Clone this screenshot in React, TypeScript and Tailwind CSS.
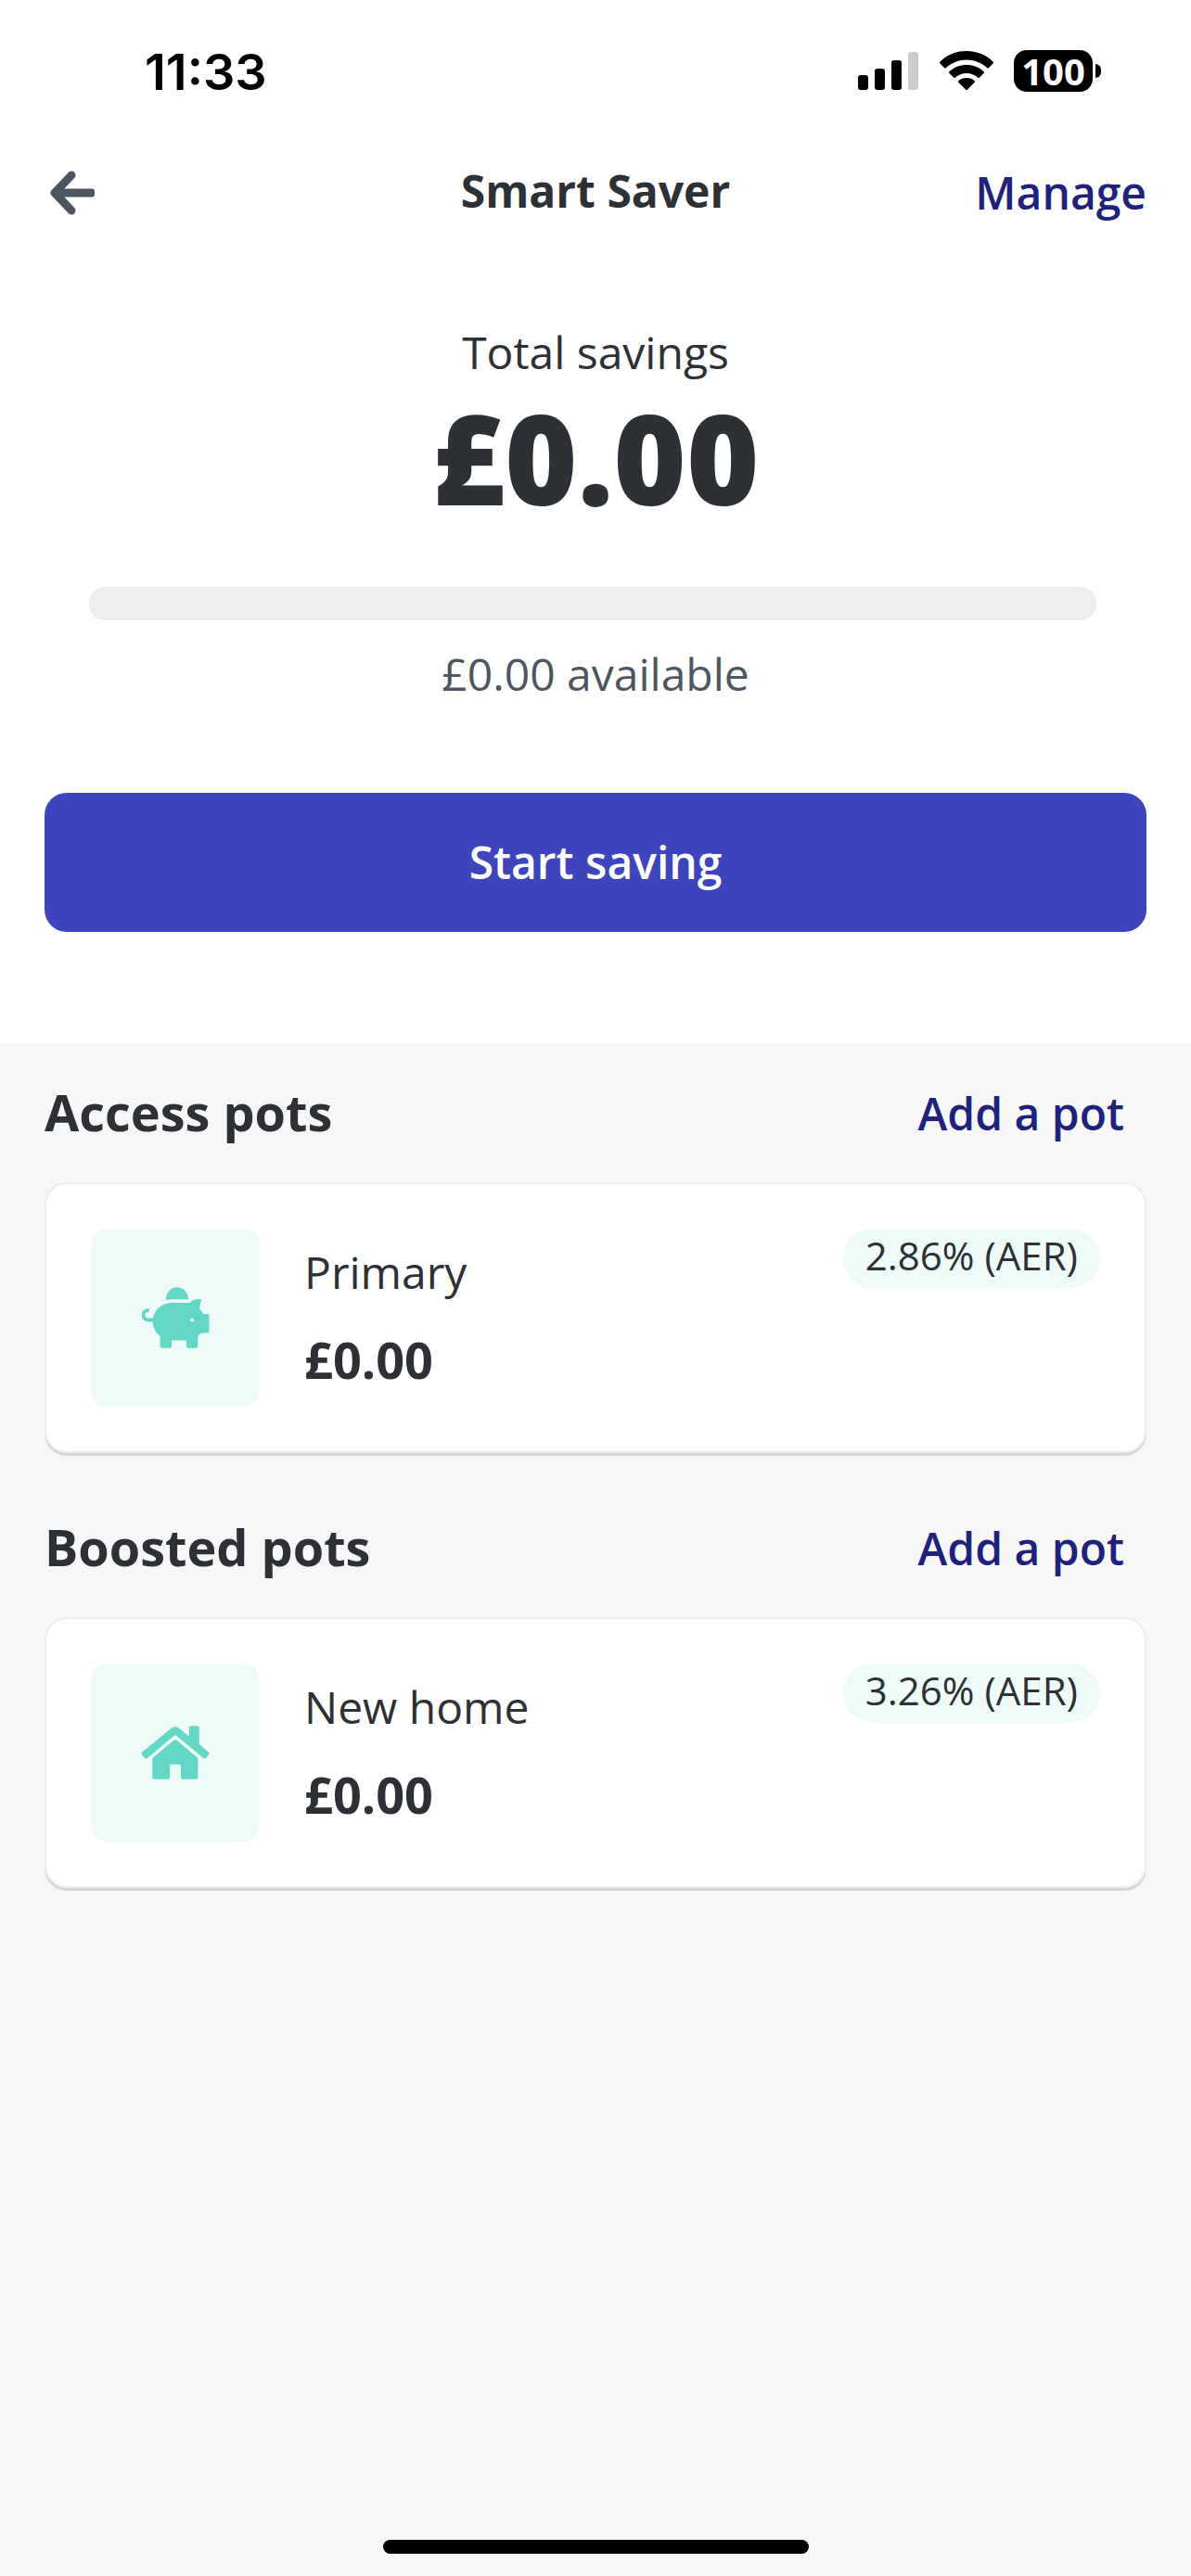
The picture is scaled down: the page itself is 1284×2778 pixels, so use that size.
import React from "react";

type Pot = {
	name: string;
	balance: string;
	rate: string;
	icon: React.ReactNode;
};

type PotGroup = {
	title: string;
	pots: Pot[];
};

const PiggyIcon = () => (
	<svg
		viewBox="185 233 224 201"
		className="w-[74px] h-[66px] text-[#62d7c6]"
		fill="currentColor"
		aria-hidden="true"
	>
		<path d="M266 275A37 40 0 0 1 340 273H290Q276 273 266 275Z" />
		<path
			d="M211 309C200 308 192 315 192 325C192 335 199 341 209 341H226"
			fill="none"
			stroke="currentColor"
			strokeWidth="12"
		/>
		<path
			fillRule="evenodd"
			d="M285 285H344C352 276 364 271 383 273L376 303Q384 310 389 321H403Q408 321 408 326V378Q408 384 402 384H384Q377 388 371 395V427Q371 433 365 433H339Q333 433 333 427V408H285V427Q285 433 279 433H253Q247 433 247 427V394C232 382 223 366 223 347C223 312 250 285 285 285ZM346 341a6 6 0 1 0 12 0a6 6 0 1 0 -12 0Z"
		/>
	</svg>
);

const HouseIcon = () => (
	<svg
		viewBox="185 242 224 176"
		className="w-[74px] h-[58px] text-[#62d7c6]"
		fill="currentColor"
		aria-hidden="true"
	>
		<path d="M187 330L284 250Q297 240 309 250L342 277V249Q342 243 348 243H369Q375 243 375 249V303L407 330Q409 333 406 337L397 348Q393 352 389 348L301 275Q297 271 293 275L205 348Q201 352 197 348L188 337Q185 333 187 330Z" />
		<path d="M292 290Q297 286 302 290L371 348V411Q371 417 365 417H321Q315 417 315 411V374Q315 369 310 369H284Q279 369 279 374V411Q279 417 273 417H229Q222 417 222 411V348Z" />
	</svg>
);

const potGroups: PotGroup[] = [
	{
		title: "Access pots",
		pots: [
			{
				name: "Primary",
				balance: "£0.00",
				rate: "2.86% (AER)",
				icon: <PiggyIcon />,
			},
		],
	},
	{
		title: "Boosted pots",
		pots: [
			{
				name: "New home",
				balance: "£0.00",
				rate: "3.26% (AER)",
				icon: <HouseIcon />,
			},
		],
	},
];

const StatusBar = () => (
	<div className="flex items-center justify-between h-[156px] pl-[156px] pr-[97px] text-black">
		<span className="font-['Inter',sans-serif] text-[54px] leading-[64px] font-semibold">
			11:33
		</span>
		<div className="flex items-center gap-[22px] pb-1">
			<svg viewBox="0 0 66 42" className="w-[66px] h-[42px]" aria-hidden="true">
				<rect x="0" y="26" width="11" height="16" rx="3" />
				<rect x="18" y="19" width="11" height="23" rx="3" />
				<rect x="36" y="10" width="11" height="32" rx="3" />
				<rect x="54" y="1" width="11" height="41" rx="3" fill="#cccccc" />
			</svg>
			<svg viewBox="0 0 58 42" className="w-[58px] h-[42px]" aria-hidden="true">
				<path d="M29 0C40 0 50 4 57.500 11.500Q58.500 12.500 57.500 13.500L53 18Q52 19 51 18C45 12.500 37 9.500 29 9.500S13 12.500 7 18Q6 19 5 18L0.500 13.500Q-0.500 12.500 0.500 11.500C8 4 18 0 29 0Z" />
				<path d="M29 15C36 15 42.500 17.500 47.500 22Q48.500 23 47.500 24L43 28.500Q42 29.500 41 28.500C37.500 25.500 33.500 24 29 24S20.500 25.500 17 28.500Q16 29.500 15 28.500L10.500 24Q9.500 23 10.500 22C15.500 17.500 22 15 29 15Z" />
				<path d="M29 29C32.500 29 35.500 30.200 37.500 32Q38.500 33 37.500 34L30 41.500Q29 42.500 28 41.500L20.500 34Q19.500 33 20.500 32C22.500 30.200 25.500 29 29 29Z" />
			</svg>
			<div className="flex items-center gap-[3px]">
				<span className="flex items-center justify-center w-[85px] h-[45px] rounded-[14px] bg-black text-[40px] leading-[45px] font-bold text-white">
					100
				</span>
				<span className="w-[6px] h-[15px] rounded-r-full bg-black" />
			</div>
		</div>
	</div>
);

const Header = () => (
	<header className="grid grid-cols-[1fr_auto_1fr] items-center h-[104px] px-12">
		<button type="button" aria-label="Back" className="w-fit px-[6px]">
			<svg
				viewBox="0 0 48 48"
				className="w-12 h-12 text-[#4d5561]"
				fill="none"
				stroke="currentColor"
				strokeWidth="9"
				strokeLinecap="round"
				strokeLinejoin="round"
				aria-hidden="true"
			>
				<path d="M23 5L5 24L23 43" />
				<rect
					x="6"
					y="19.500"
					width="42"
					height="9"
					rx="3"
					fill="currentColor"
					stroke="none"
				/>
			</svg>
		</button>
		<h1 className="pb-1 text-[48px] leading-[72px] font-bold">Smart Saver</h1>
		<button
			type="button"
			className="justify-self-end text-[48px] leading-[72px] font-semibold text-[#20217b]"
		>
			Manage
		</button>
	</header>
);

const PotCard = ({ name, balance, rate, icon }: Pot) => (
	<li className="flex items-start gap-12 p-12 bg-white border-2 border-[#eeeeee] rounded-[24px] shadow-[0_3px_0_0_#d3d6d9]">
		<div className="flex items-center justify-center w-[182px] h-[192px] rounded-[18px] bg-[#eefbf9]">
			{icon}
		</div>
		<div className="flex flex-col flex-1 self-center gap-[18px]">
			<h3 className="text-[48px] leading-[72px]">{name}</h3>
			<p className="text-[54px] leading-[80px] font-bold">{balance}</p>
		</div>
		<span className="px-6 pb-[6px] rounded-full bg-[#eefbf9] text-[42px] leading-[58px]">
			{rate}
		</span>
	</li>
);

const App = () => {
	return (
		<div className="flex flex-col min-h-screen bg-[#f7f7f7] font-['Open_Sans',sans-serif] text-[#2d3035]">
			<div className="bg-white">
				<StatusBar />
				<Header />
				<section className="flex flex-col items-center px-12 pt-[84px] pb-[120px]">
					<h2 className="text-[48px] leading-[72px]">Total savings</h2>
					<p className="text-[134px] leading-[154px] font-extrabold">£0.00</p>
					<div className="self-stretch pl-12 pr-[54px] mt-[63px]">
						<div
							role="progressbar"
							aria-label="Savings"
							aria-valuenow={0}
							className="h-9 rounded-full bg-[#eeeeee]"
						/>
					</div>
					<p className="mt-[22px] text-[48px] leading-[72px] text-[#4d5561]">
						£0.00 available
					</p>
					<button
						type="button"
						className="self-stretch h-[150px] mt-[92px] rounded-[24px] bg-[#3e44bb] text-[48px] leading-[72px] font-semibold text-white"
					>
						Start saving
					</button>
				</section>
			</div>

			<main className="flex flex-col flex-1 gap-[27px] px-12">
				{potGroups.map((group) => (
					<section key={group.title}>
						<div className="flex items-center justify-between pt-[34px] pb-9 pr-6">
							<h2 className="text-[54px] leading-[80px] font-bold">
								{group.title}
							</h2>
							<button
								type="button"
								className="pt-1 text-[48px] leading-[72px] font-semibold text-[#20217b]"
							>
								Add a pot
							</button>
						</div>
						<ul>
							{group.pots.map((pot) => (
								<PotCard key={pot.name} {...pot} />
							))}
						</ul>
					</section>
				))}
			</main>

			<div className="flex justify-center pb-6">
				<div className="w-[459px] h-[15px] rounded-full bg-black" />
			</div>
		</div>
	);
};

export default App;
